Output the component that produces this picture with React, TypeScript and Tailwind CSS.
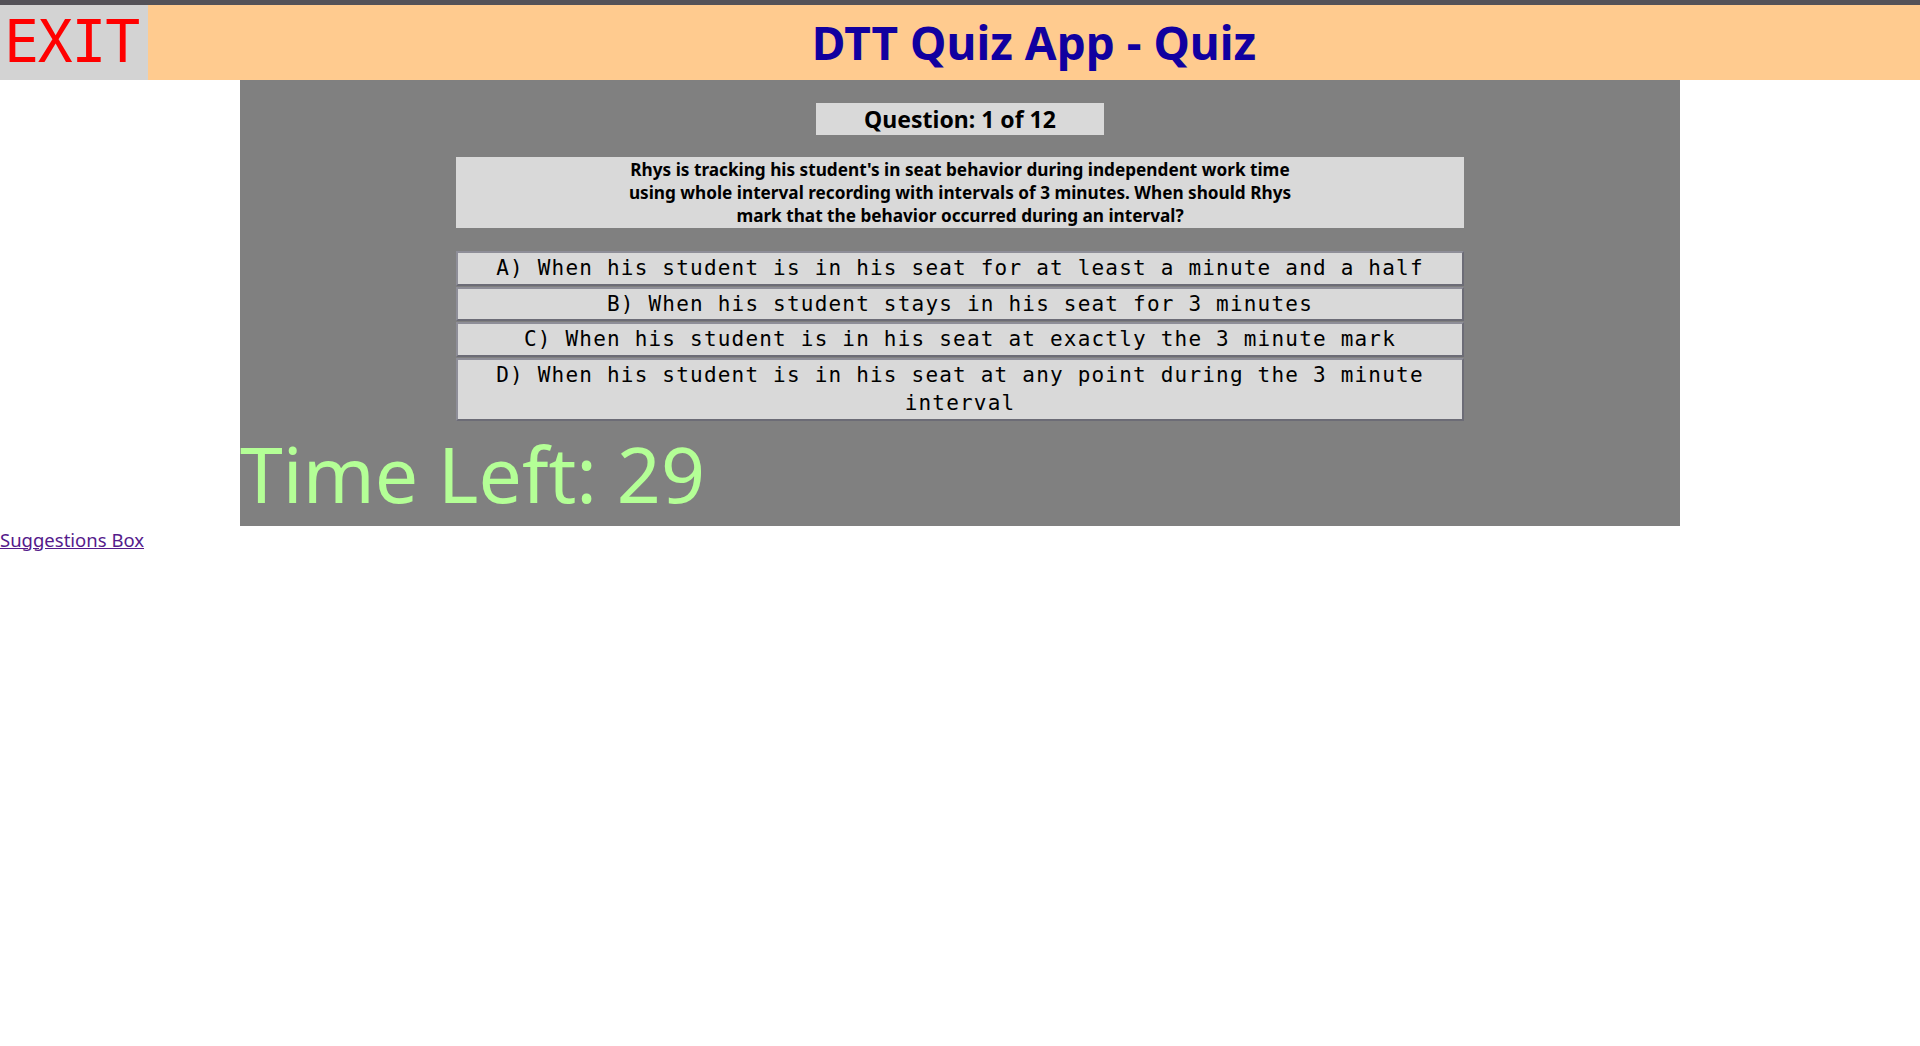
const answers = [
  'A) When his student is in his seat for at least a minute and a half',
  'B) When his student stays in his seat for 3 minutes',
  'C) When his student is in his seat at exactly the 3 minute mark',
  'D) When his student is in his seat at any point during the 3 minute interval',
];

export default function App() {
  return (
    <div className="min-h-[1046px] bg-white font-['Noto_Sans',sans-serif]">
      {/* top strip */}
      <div className="h-[5px] bg-[#545258]" />

      {/* header */}
      <div className="flex h-[75px] bg-[#ffcb8f]">
        <button className="flex w-[148px] items-center justify-start bg-[#d3d3d3] pl-[4px] font-['DejaVu_Sans_Mono',monospace] text-[58px] tracking-[-1.2px] text-[#ff0000]">
          EXIT
        </button>
        <div className="flex flex-1 items-center justify-center">
          <h1 className="text-[46px] font-bold text-[#1100a0]">DTT Quiz App - Quiz</h1>
        </div>
      </div>

      {/* quiz panel */}
      <div className="mx-auto flex w-[1440px] flex-col items-center bg-[#808080] pt-[23px]">
        <div className="w-[288px] bg-[#d9d9d9] text-center text-[23px] font-bold leading-[32px] text-black">
          Question: 1 of 12
        </div>

        <div className="mt-[22px] w-[1008px] bg-[#d9d9d9] px-[158px] py-px text-center text-[17.2px] font-bold leading-[23px] text-black">
          Rhys is tracking his student's in seat behavior during independent work time using whole interval recording with intervals of 3 minutes. When should Rhys mark that the behavior occurred during an interval?
        </div>

        <div className="mt-[23px] flex w-[1008px] flex-col gap-px">
          {answers.map((a) => (
            <button
              key={a}
              className="border-2 border-t-[#8e8e98] border-l-[#8e8e98] border-b-[#6c6c76] border-r-[#6c6c76] bg-[#d9d9d9] px-3 py-px text-center font-['DejaVu_Sans_Mono',monospace] text-[21px] leading-[28.5px] tracking-[1.2px] text-black"
            >
              {a}
            </button>
          ))}
        </div>

        <div className="self-stretch text-[77px] leading-[105px] text-[#b4ff96]">Time Left: 29</div>
      </div>

      <a href="#" className="block w-fit text-[18.5px] text-[#551a8b] underline">
        Suggestions Box
      </a>
    </div>
  );
}
